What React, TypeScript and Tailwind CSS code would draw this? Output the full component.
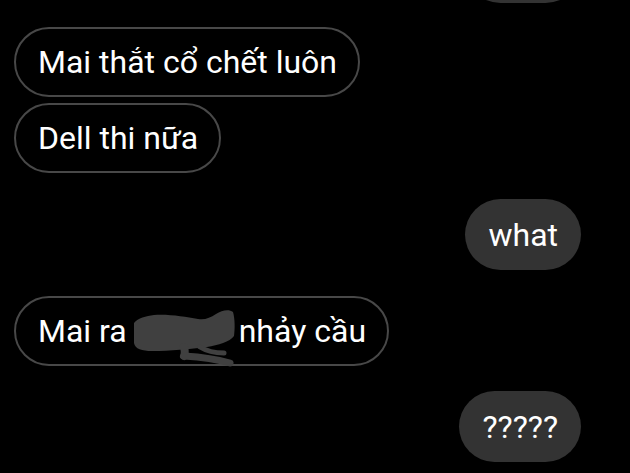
import React from "react";

const Left = ({ children }: { children: React.ReactNode }) => (
  <div className="flex">
    <div className="h-[70px] flex items-center rounded-full border-2 border-[#484848] pl-[22px] pr-[21px] text-[32px] text-white">
      {children}
    </div>
  </div>
);

const Right = ({ children }: { children: React.ReactNode }) => (
  <div className="flex justify-end pr-[49px]">
    <div className="h-[71px] flex items-center rounded-full bg-[#333333] px-[23px] text-[32px] text-white">
      {children}
    </div>
  </div>
);

const Scribble = () => (
  <span className="relative inline-block w-[112px] h-[1em] align-middle">
    <svg
      className="absolute left-[3px] top-[-6px]"
      width="112"
      height="58"
      viewBox="0 0 112 58"
      fill="none"
    >
      <path
        d="M4 14 C8 9 16 7 24 6 C40 5 55 8 68 10 C75 11 80 9 86 5 C92 1 99 0 103 3 C105 10 105 20 104 27 C100 33 88 36 77 38 C60 40 40 42 22 42 C12 42 5 40 4 34 Z"
        fill="#404040"
      />
      <path d="M54 38 C55 42 55 45 54 47" stroke="#404040" strokeWidth="8" strokeLinecap="round" />
      <path d="M54 47 C70 48 86 50 100 54" stroke="#404040" strokeWidth="7" strokeLinecap="round" />
      <path d="M70 38 C78 43 86 44 94 44" stroke="#404040" strokeWidth="5" strokeLinecap="round" />
    </svg>
  </span>
);

export default function App() {
  return (
    <div
      className="w-[630px] h-[473px] bg-black overflow-hidden"
      style={{ fontFamily: "Roboto, 'Noto Sans', sans-serif" }}
    >
      <div className="flex flex-col pl-[14px] mt-[-68px]">
        <Right>
          <span className="invisible">what</span>
        </Right>
        <div className="h-[24px]" />
        <Left>Mai thắt cổ chết luôn</Left>
        <div className="h-[6px]" />
        <Left>Dell thi nữa</Left>
        <div className="h-[26px]" />
        <Right>what</Right>
        <div className="h-[26px]" />
        <Left>
          <span>Mai ra</span>
          <Scribble />
          <span>nhảy cầu</span>
        </Left>
        <div className="h-[25px]" />
        <Right>?????</Right>
      </div>
    </div>
  );
}
